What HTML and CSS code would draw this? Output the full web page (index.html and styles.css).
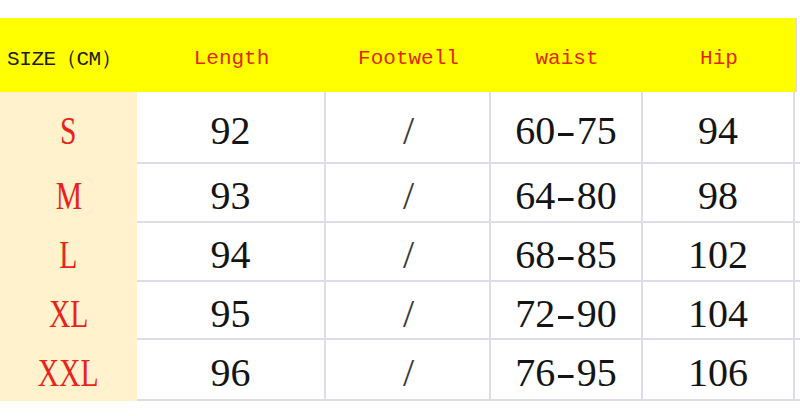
FILE: index.html
```html
<!DOCTYPE html>
<html>
<head>
<meta charset="utf-8">
<link rel="stylesheet" href="styles.css">
</head>
<body>
<div class="page">
  <div class="chart">
    <div class="hd hd-first">SIZE（CM）</div>
    <div class="hd">Length</div>
    <div class="hd">Footwell</div>
    <div class="hd">waist</div>
    <div class="hd">Hip</div>
    <div class="hd-rest"></div>

    <div class="sz"><span class="sq">S</span></div>
    <div class="c">92</div><div class="c slash">/</div><div class="c">60<span class="dash">-</span>75</div><div class="c">94</div><div class="c rest"></div>

    <div class="sz"><span class="sq">M</span></div>
    <div class="c">93</div><div class="c slash">/</div><div class="c">64<span class="dash">-</span>80</div><div class="c">98</div><div class="c rest"></div>

    <div class="sz"><span class="sq">L</span></div>
    <div class="c">94</div><div class="c slash">/</div><div class="c">68<span class="dash">-</span>85</div><div class="c">102</div><div class="c rest"></div>

    <div class="sz"><span class="sq">XL</span></div>
    <div class="c">95</div><div class="c slash">/</div><div class="c">72<span class="dash">-</span>90</div><div class="c">104</div><div class="c rest"></div>

    <div class="sz"><span class="sq">XXL</span></div>
    <div class="c">96</div><div class="c slash">/</div><div class="c">76<span class="dash">-</span>95</div><div class="c">106</div><div class="c rest"></div>
  </div>
</div>
</body>
</html>
```

FILE: styles.css
```css
html, body {
  margin: 0;
  padding: 0;
  background: #ffffff;
}

.page {
  width: 800px;
  height: 416px;
  overflow: hidden;
  padding-top: 18px;
  box-sizing: border-box;
}

.chart {
  display: grid;
  grid-template-columns: 137px 189px 165px 152px 152px 11px;
  grid-template-rows: 74px 72px 59px 59px 58px 61px;
  width: 806px;
}

.hd {
  background: #ffff00;
  display: flex;
  align-items: center;
  justify-content: center;
  font-family: "Liberation Mono", "DejaVu Sans Mono", monospace;
  font-size: 21px;
  color: #e02800;
  padding-top: 6px;
  box-sizing: border-box;
}

.hd-first {
  justify-content: flex-start;
  padding-left: 7px;
  color: #1a1a1a;
  letter-spacing: -0.4px;
}

.hd-rest {
  background: #ffffff;
  border-left: 2px solid #dcdde8;
}

.sz {
  background: #fff2cc;
  display: flex;
  align-items: center;
  justify-content: center;
  font-family: "Liberation Serif", "Times New Roman", serif;
  font-size: 40px;
  color: #e8231c;
  padding-top: 4px;
  box-sizing: border-box;
}

.sq {
  display: inline-block;
  transform: scaleX(0.74);
}

.c {
  display: flex;
  align-items: center;
  justify-content: center;
  font-family: "Liberation Serif", "Times New Roman", serif;
  font-size: 40px;
  color: #141414;
  border-right: 2px solid #dcdde8;
  border-bottom: 2px solid #dcdde8;
  box-sizing: border-box;
  padding-top: 6px;
}

.dash {
  display: inline-block;
  margin: 0 4px;
  transform: scaleX(1.5);
}

.slash {
  color: #3a3a3a;
  padding-left: 2px;
}

.rest {
  border-right: none;
}
```
